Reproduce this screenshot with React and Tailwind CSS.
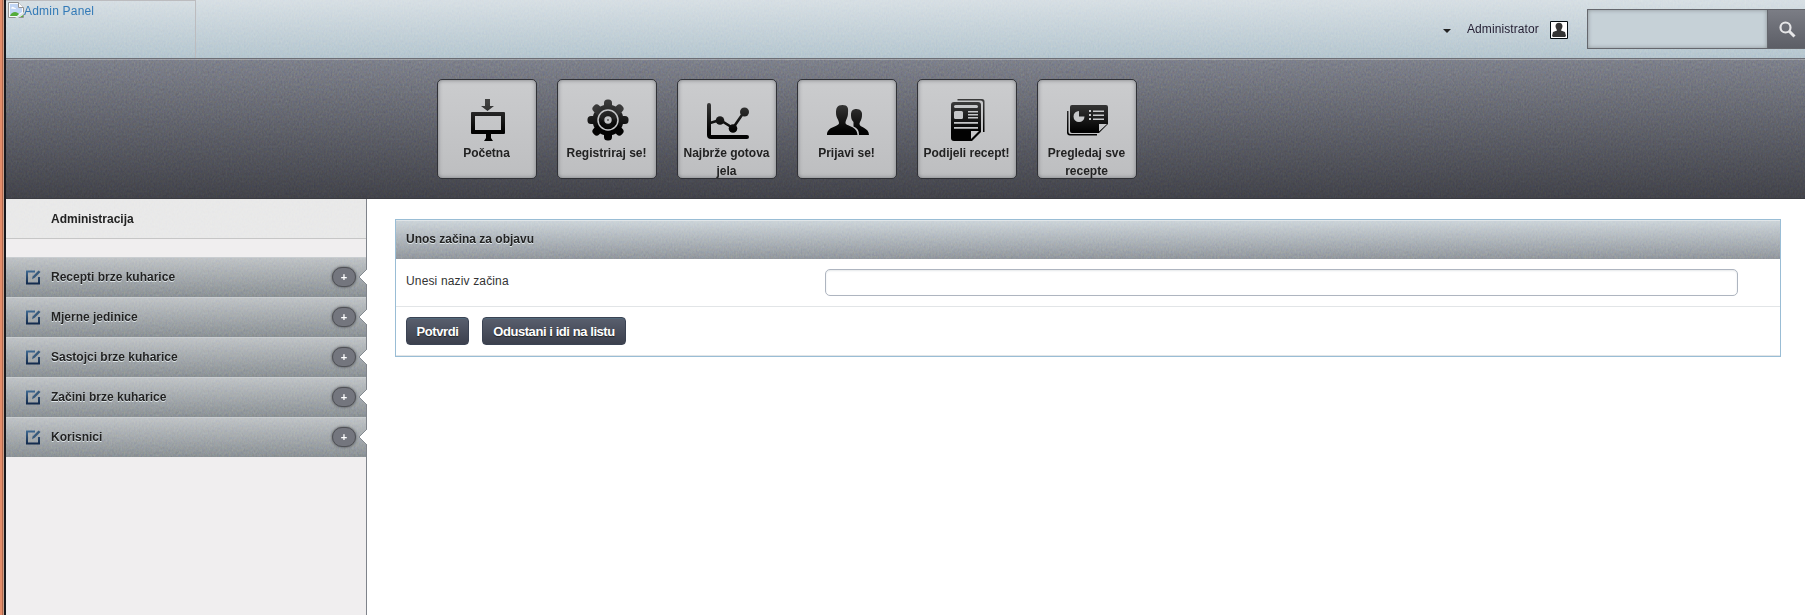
function Grain({ id }) {
  return (
    <svg className="pointer-events-none absolute inset-0 -z-10 h-full w-full opacity-12 mix-blend-overlay" aria-hidden="true">
      <filter id={id} x="0" y="0" width="100%" height="100%" colorInterpolationFilters="sRGB">
        <feTurbulence type="fractalNoise" baseFrequency="0.6 0.4" numOctaves="2" stitchTiles="stitch" />
        <feColorMatrix values="1 0.5 0 0 -0.25  0.5 1 0 0 -0.25  0 0.5 1 0 -0.25  0 0 0 0 1" />
      </filter>
      <rect width="100%" height="100%" filter={`url(#${id})`} />
    </svg>
  );
}

const ink = "url(#ink)";

const icons = {
  home: (
    <g fill={ink}>
      <path d="M19 1h5v7h4l-6.5 5L15 8h4z" fillOpacity=".95" />
      <path fillRule="evenodd" d="M6 14h32q1 0 1 1v20q0 1-1 1H25v4l2 3h-9l2-3v-4H6q-1 0-1-1V15q0-1 1-1zM9 18v14h26V18z" />
    </g>
  ),
  gear: (
    <g>
      <g fill={ink}>
        <circle cx="22" cy="22" r="15.5" />
        <rect x="18" y="1.5" width="8" height="41" rx="3.5" />
        <rect x="1.5" y="18" width="41" height="8" rx="3.5" />
        <rect x="18" y="2" width="8" height="40" rx="3.5" transform="rotate(45 22 22)" />
        <rect x="18" y="2" width="8" height="40" rx="3.5" transform="rotate(-45 22 22)" />
      </g>
      <circle cx="22" cy="22" r="10" fill="none" stroke="#c4c5c7" strokeWidth="1.5" />
      <circle cx="22" cy="22" r="3.7" fill="#c4c5c7" />
      <circle cx="22" cy="22" r="0.8" fill="#111" />
    </g>
  ),
  chart: (
    <g>
      <path d="M3 7v30q0 2 2 2h36" fill="none" stroke={ink} strokeWidth="4" strokeLinecap="round" />
      <path d="M4 25l10-3 13 8 11-16" fill="none" stroke={ink} strokeWidth="2.6" />
      <g fill={ink}><circle cx="14" cy="22.5" r="4.3" /><circle cx="27" cy="30.5" r="4.3" /><circle cx="38.5" cy="14" r="4.5" /></g>
    </g>
  ),
  users: (
    <g fill={ink}>
      <path d="M25 17c0-4 1.500-6 5.500-6s6 3 5.500 6c0 5-2.500 7-2.500 9 0 3.500 9.500 3.500 9.500 11H33c0-6-3-7-5.500-8.500V24c-2-2-2.500-4-2.500-7z" />
      <path d="M10 15c0-5 1-8 6.500-8s6 3 5.500 8c0 5-2.500 7-2.500 10s12 3 12 12H1c0-9 12-8 12-12 0-3-3-5-3-10z" />
    </g>
  ),
  article: (
    <g>
      <path d="M11.500 1H36q2.500 0 2.500 2.500V34H37V5q0-2.500-2.500-2.500H11.500z" fill={ink} />
      <path d="M8 4h24q3 0 3 3v27l-9 9H8q-3 0-3-3V7q0-3 3-3z" fill={ink} />
      <g fill="#c6c7c9">
        <rect x="8" y="7" width="24" height="3" rx="1.500" />
        <rect x="8" y="13" width="9" height="8" rx="1.500" />
        <path d="M22 13h10v1.500H22zM22 16h10v1.500H22zM22 19h10v1.500H22zM8 24h24v1.700H8zM8 29h24v1.700H8zM25 33h8l-8 8z" />
      </g>
    </g>
  ),
  report: (
    <g>
      <path d="M1 13h1.500v21q0 2 2 2H31v1.500H4q-3 0-3-3z" fill={ink} />
      <path d="M6 7h34q2 0 2 2v17l-9 9H6q-2 0-2-2V9q0-2 2-2z" fill={ink} />
      <path d="M13 13v5.500h5.500a5.500 5.500 0 1 1-5.500-5.500z" fill="#c6c7c9" />
      <g fill="#c6c7c9"><path d="M23 12h2v2h-2zM23 16h2v2h-2zM23 20h2v2h-2zM27 12.500h11V14H27zM27 16.500h11V18H27zM27 20.500h11V22H27zM33 26h8l-8 7.500z" /></g>
    </g>
  ),
};

const tiles = [
  ["home", "Početna"],
  ["gear", "Registriraj se!"],
  ["chart", "Najbrže gotova jela"],
  ["users", "Prijavi se!"],
  ["article", "Podijeli recept!"],
  ["report", "Pregledaj sve recepte"],
];

const menu = ["Recepti brze kuharice", "Mjerne jedinice", "Sastojci brze kuharice", "Začini brze kuharice", "Korisnici"];

function Tile({ icon, label }) {
  return (
    <a className="h-[100px] w-[100px] overflow-hidden rounded-[5px] border border-[#303136] bg-linear-to-b from-[#cbccce] to-[#bdbec0] pt-[18px] text-center text-[12px] leading-[18px] font-bold text-[#222] shadow-[inset_0_0_4px_#77797d]">
      <svg className="ml-7 block h-11 w-11" viewBox="0 0 44 44">{icons[icon]}</svg>
      <span className="block pt-0.5 pr-px">{label}</span>
    </a>
  );
}

function MenuItem({ label, index }) {
  return (
    <li className="relative isolate flex h-10 items-center border-t border-[#c9cdd0] bg-linear-to-b from-[#bfc3c6] to-[#8b9195] pb-px pl-5">
      <Grain id={`grain-menu-${index}`} />
      <svg className="h-[15px] w-[15px]" viewBox="0 0 15 15">
        <path d="M9 1.500H1v12h12V7" fill="none" stroke="url(#blue)" strokeWidth="2" />
        <path d="M6 9l.7-2.500L12.500 .5l2 1.600L8.500 8z" fill="#385a7c" />
      </svg>
      <span className="ml-[10px] text-[12px] font-bold text-[#222] [text-shadow:0_1px_0_#dfe7eb]">{label}</span>
      <span className="mr-[10px] ml-auto flex h-5 w-6 items-center justify-center rounded-[10px] border border-[#505156] bg-[#74767e] text-[11px] leading-none font-bold text-white shadow-[0_0_3px_#45484c]">+</span>
      <svg className="absolute top-[11px] right-[-1px] h-4 w-2" viewBox="0 0 8 16">
        <path d="M8 0v16L0 8z" fill="#fff" />
        <path d="M8 0L0 8l8 8" fill="none" stroke="#858a90" />
      </svg>
    </li>
  );
}

const button = "h-7 rounded-[4px] border border-[#3b4353] bg-linear-to-b from-[#595f6e] to-[#3c404d] pt-px text-[13px] font-bold tracking-[-0.43px] whitespace-nowrap text-white shadow-[inset_0_1px_0_#52697b] [text-shadow:0_1px_1px_#222]";

export default function App() {
  return (
    <div className="flex h-[615px] w-[1805px] overflow-hidden bg-white font-['Liberation_Sans',Arial,sans-serif] text-[12px] text-[#333]">
      <svg className="absolute h-0 w-0" aria-hidden="true">
        <defs>
          <linearGradient id="ink" x1="0" y1="0" x2="0" y2="44" gradientUnits="userSpaceOnUse"><stop offset=".1" stopColor="#3a3a3a" /><stop offset=".75" stopColor="#020202" /></linearGradient>
          <linearGradient id="blue" x1="0" y1="0" x2="0" y2="15" gradientUnits="userSpaceOnUse"><stop stopColor="#416c95" /><stop offset="1" stopColor="#0f2546" /></linearGradient>
        </defs>
      </svg>
      <div className="flex w-1.5 shrink-0 border-r-2 border-[#17181d] bg-[#c8a08c]">
        <div className="w-[2px] bg-[#e48d6a]" />
        <div className="w-px bg-[#b3694d]" />
      </div>
      <div className="flex min-w-0 flex-1 flex-col">
        <header className="relative isolate flex h-[58px] shrink-0 items-start bg-linear-to-b from-[#d7dfe4] to-[#b5c6cf]">
          <Grain id="grain-top" />
          <a className="flex h-[58px] w-[190px] items-start border-t border-r border-[#bcbcbf] pt-px pl-0.5 text-[#337ab7]">
            <svg className="h-4 w-4" viewBox="0 0 16 16">
              <path d="M.5 .5h10l5 5v10H.5z" fill="#f8fafc" stroke="#929292" />
              <path d="M2 2h8v4h4v4L8 14H2z" fill="#c1d5f4" />
              <path d="M2 14c1-3 3-4 5-4 2 0 3 1 4 2l-2 2z" fill="#55ac3b" />
              <path d="M3 6.500q1-3 3-1 2 0 2 1.500z" fill="#fff" />
              <path d="M10.500 .5v5h5" fill="#fff" stroke="#929292" />
              <path d="M7 16l9-6v2l-6 4z" fill="#d7e0e5" />
              <path d="M12 15l3-2v2z" fill="#55ac3b" />
            </svg>
            <span className="pt-px leading-[17px] tracking-[0.2px]">Admin Panel</span>
          </a>
          <div className="mt-[9px] ml-auto flex h-10 items-center">
            <span className="mt-[3px] h-0 w-0 border-x-4 border-t-4 border-x-transparent border-t-[#222]" />
            <span className="ml-4 w-[83px] tracking-[0.08px] text-[#221d31]">Administrator</span>
            <svg className="mt-0.5 h-[18px] w-[18px]" viewBox="0 0 18 18">
              <path d="M.5 .5h17v17H.5z" fill="#fff" stroke="#020b10" />
              <path d="M5.500 5c0-4.500 7-4.500 7 0 0 2-1.500 3.500-1.500 4.500l4 1.500 1 4-1 1H3l-1-1 1-4 4-1.500C7 8.500 5.500 7 5.500 5z" fill="#343434" />
            </svg>
            <div className="ml-[19px] flex h-10 w-[218px] border border-r-0 border-[#65676d]">
              <input aria-label="Traži" className="h-full min-w-0 flex-1 bg-[#c6d1d7] px-2 shadow-[inset_0_0_4px_#8b9296] outline-none" />
              <button aria-label="Pokreni pretragu" className="flex w-[38px] items-center border-l border-[#65676d] bg-linear-to-b from-[#7b7d85] to-[#5c5e66] pl-[11px]">
                <svg className="h-[17px] w-[17px]" viewBox="0 0 17 17">
                  <circle cx="6.500" cy="6.500" r="5" fill="none" stroke="#e6e6e8" strokeWidth="2.200" />
                  <path d="M10 10l5.500 5.500" stroke="#e6e6e8" strokeWidth="3" />
                </svg>
              </button>
            </div>
          </div>
        </header>
        <nav className="relative isolate flex h-[141px] shrink-0 justify-start gap-5 border-t border-b border-t-[#6c6e75] border-b-[#3b3c42] bg-linear-to-b from-[#7e818b] to-[#42434a] pt-5 pl-[431px] shadow-[inset_0_1px_0_#a0a2a8]">
          <Grain id="grain-nav" />
          {tiles.map(([icon, label]) => <Tile key={icon} icon={icon} label={label} />)}
        </nav>
        <div className="flex min-h-0 flex-1">
          <aside className="w-[361px] shrink-0 border-r border-[#7f838a] bg-[#f0eeef]">
            <h2 className="relative isolate flex h-10 items-center border-b border-[#c6c6c6] bg-[#e9e9e9] pl-[45px] text-[12px] font-bold text-[#222]"><Grain id="grain-title" />Administracija</h2>
            <ul className="mt-[18px]">{menu.map((label, i) => <MenuItem key={label} label={label} index={i} />)}</ul>
          </aside>
          <main className="flex-1 pt-5 pr-6 pl-7">
            <form className="h-[138px] border border-[#99bdd5]">
              <h3 className="relative isolate flex h-[39px] items-center border-t border-[#e0e5e8] bg-linear-to-b from-[#ccd4d9] to-[#92979d] pb-0.5 pl-[10px] text-[12px] font-bold text-[#222] [text-shadow:0_1px_0_#dfe7eb]"><Grain id="grain-form" />Unos začina za objavu</h3>
              <div className="flex h-12 items-start border-b border-[#e2e5e7] pt-[10px] pl-[10px]">
                <label htmlFor="spice" className="w-[419px] pt-[3px] leading-[18px] tracking-[0.15px]">Unesi naziv začina</label>
                <input id="spice" className="h-[27px] w-[913px] rounded-[5px] border border-[#aeb5c0] px-2 shadow-[inset_0_1px_2px_#e5e8ea] outline-none" />
              </div>
              <div className="flex h-[49px] gap-[13px] border-b border-[#e2e5e7] pt-[10px] pl-[10px]">
                <button type="button" className={`${button} w-[63px]`}>Potvrdi</button>
                <button type="button" className={`${button} w-[144px]`}>Odustani i idi na listu</button>
              </div>
            </form>
          </main>
        </div>
      </div>
    </div>
  );
}
